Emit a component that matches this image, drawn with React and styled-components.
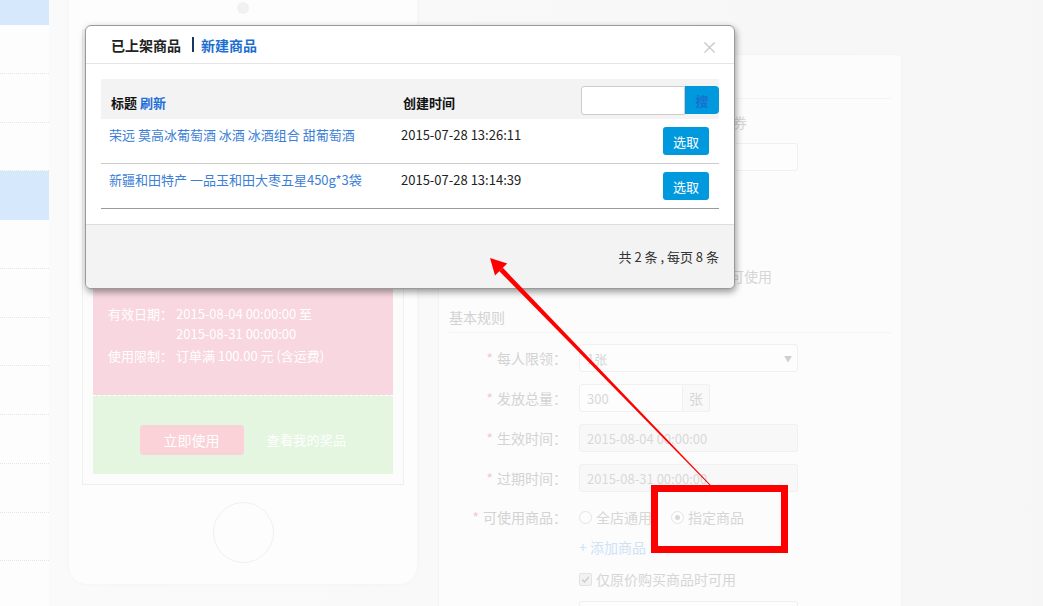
import React from 'react';
import styled, { createGlobalStyle } from 'styled-components';

const GlobalStyle = createGlobalStyle`
  html, body { margin: 0; padding: 0; }
  body {
    font-family: "Noto Sans CJK SC", "Microsoft YaHei", sans-serif;
    font-size: 12px;
    color: #333;
    background: #f9f9f9;
  }
  * { box-sizing: border-box; }
`;

const Page = styled.div`
  position: relative;
  display: flex;
  width: 1043px;
  height: 606px;
  overflow: hidden;
`;

/* ---------- sidebar ---------- */
const Sidebar = styled.div`
  width: 49px;
  flex: none;
  background: #fdfdfd;
`;
const SideList = styled.ul`
  list-style: none;
  margin: -23.75px 0 0;
  padding: 0;
`;
const SideItem = styled.li`
  height: 48.75px;
  background: ${p => (p.$active ? '#d5e8fc' : 'transparent')};
  border-bottom: 1px dotted ${p => (p.$active ? 'transparent' : '#e4e4e4')};
`;

/* ---------- main ---------- */
const Main = styled.div`
  flex: 1;
  display: flex;
  align-items: flex-start;
  gap: 21px;
  padding-left: 20px;
  background: linear-gradient(90deg, #fafafa 0%, #f8f8f8 60%, #f6f6f6 100%);
`;

/* phone preview */
const Phone = styled.div`
  width: 348px;
  height: 614px;
  margin-top: -30px;
  flex: none;
  display: flex;
  flex-direction: column;
  align-items: center;
  padding: 32px 13px 0;
  background: #fdfdfd;
  border-radius: 0 0 18px 18px;
  box-shadow: 0 0 4px rgba(0, 0, 0, 0.03);
`;
const Camera = styled.span`
  width: 12px;
  height: 12px;
  border-radius: 50%;
  background: #f1f1f1;
  margin-bottom: 16px;
`;
const Screen = styled.div`
  align-self: stretch;
  border: 1px solid #efefef;
  background: #fcfcfc;
  padding: 10px;
`;
const CouponTop = styled.div`
  height: 354px;
  background: #f8d7e0;
  color: #fff;
  display: flex;
  flex-direction: column;
  justify-content: flex-end;
  padding: 30px 15px 29px;
`;
const InfoRow = styled.div`
  display: flex;
  font-size: 13px;
  line-height: 20px;
  margin-top: 2px;
`;
const InfoLabel = styled.span`
  width: 68px;
  flex: none;
`;
const CouponBottom = styled.div`
  height: 79px;
  background: #e4f5e0;
  border-top: 1px dashed #fff;
  display: flex;
  align-items: center;
  justify-content: center;
  gap: 23px;
  padding-top: 9px;
`;
const UseButton = styled.span`
  width: 104px;
  height: 30px;
  border-radius: 3px;
  background: #fad2d8;
  color: #fff;
  font-size: 14px;
  display: flex;
  align-items: center;
  justify-content: center;
`;
const PrizeLink = styled.span`
  color: #fff;
  font-size: 13px;
  letter-spacing: 0.3px;
`;
const HomeButton = styled.span`
  width: 61px;
  height: 61px;
  border-radius: 50%;
  border: 1px solid #f0f0f0;
  margin-top: 17px;
`;

/* form panel */
const Panel = styled.div`
  width: 464px;
  height: 700px;
  flex: none;
  margin-top: 54px;
  padding: 0 10px;
  background: #fcfcfc;
  border: 1px solid #f3f3f3;
  border-radius: 4px;
`;
const PanelHeader = styled.div`
  height: 44px;
  display: flex;
  align-items: center;
  border-bottom: 1px solid #f3f3f3;
  font-size: 14px;
  color: #d0d0d0;
`;
const SectionTitle = styled.div`
  margin-top: ${p => p.$mt || 0}px;
  font-size: 14px;
  line-height: 20px;
  color: #d2d2d2;
  padding-bottom: 5px;
  border-bottom: 1px solid #f3f3f3;
`;
const FormRow = styled.div`
  display: flex;
  align-items: center;
  gap: 12px;
  margin-top: ${p => p.$mt}px;
  min-height: ${p => p.$h || 28}px;
`;
const Label = styled.div`
  width: 118px;
  flex: none;
  text-align: right;
  font-size: 14px;
  color: #d3d3d3;
`;
const Star = styled.span`
  color: #f8c8c8;
  margin-right: 4px;
`;
const Field = styled.div`
  width: ${p => p.$w}px;
  height: 28px;
  display: flex;
  align-items: center;
  justify-content: space-between;
  padding: 0 7px;
  font-size: 13px;
  color: #d8d8d8;
  background: ${p => (p.$disabled ? '#f8f8f8' : '#fdfdfd')};
  border: 1px solid #f0f0f0;
  border-radius: ${p => p.$radius || '3px'};
`;
const Caret = styled.span`
  font-size: 8px;
  color: #cfcfcf;
  margin-right: -2px;
`;
const InputGroup = styled.div`
  display: flex;
`;
const Addon = styled.div`
  width: 27px;
  height: 28px;
  display: flex;
  align-items: center;
  justify-content: center;
  font-size: 14px;
  color: #d6d6d6;
  background: #f9f9f9;
  border: 1px solid #f0f0f0;
  border-left: none;
  border-radius: 0 3px 3px 0;
`;
const TipText = styled.div`
  font-size: 14px;
  line-height: 20px;
  color: #d6d6d6;
`;
const Options = styled.div`
  display: flex;
  align-items: center;
  gap: 19px;
`;
const Option = styled.label`
  display: flex;
  align-items: center;
  gap: 4px;
  font-size: 14px;
  color: #d6d6d6;
`;
const Radio = styled.span`
  position: relative;
  width: 13px;
  height: 13px;
  border-radius: 50%;
  border: 1px solid #e4e4e4;
  background: #fdfdfd;
  &::after {
    content: '';
    display: ${p => (p.$checked ? 'block' : 'none')};
    position: absolute;
    left: 3px;
    top: 3px;
    width: 5px;
    height: 5px;
    border-radius: 50%;
    background: #d9d9d9;
  }
`;
const Check = styled.span`
  width: 13px;
  height: 13px;
  border-radius: 2px;
  border: 1px solid #e2e2e2;
  background: #f2f2f2;
  display: flex;
  align-items: center;
  justify-content: center;
`;
const AddLink = styled.span`
  font-size: 14px;
  color: #cfe1f6;
`;

/* ---------- modal ---------- */
const Modal = styled.div`
  position: absolute;
  left: 85px;
  top: 25px;
  width: 650px;
  background: #fff;
  border: 1px solid #9a9a9a;
  border-radius: 6px;
  box-shadow: 1px 3px 7px rgba(0, 0, 0, 0.4);
  overflow: hidden;
`;
const ModalHeader = styled.div`
  height: 38px;
  display: flex;
  align-items: center;
  padding: 0 16px 0 25px;
  border-bottom: 1px solid #e5e5e5;
`;
const Tab = styled.span`
  font-size: 14px;
  font-weight: bold;
  color: ${p => (p.$link ? '#1d6fcf' : '#222')};
`;
const TabBar = styled.span`
  width: 2px;
  height: 15px;
  background: #17375e;
  margin: 0 7px 0 11px;
`;
const Close = styled.span`
  margin-left: auto;
  margin-top: 4px;
  font-size: 17px;
  line-height: 17px;
  color: #c6c6c6;
`;
const ModalBody = styled.div`
  padding: 15px;
`;
const Grid = styled.div`
  display: grid;
  grid-template-columns: 292px 1fr auto;
`;
const Head = styled(Grid)`
  height: 40px;
  background: #f3f3f3;
`;
const HeadCell = styled.div`
  padding: 16px 0 0 10px;
  font-size: 13px;
  line-height: 16px;
  font-weight: bold;
  color: #111;
`;
const Refresh = styled.span`
  color: #1e6fd9;
  margin-left: 3px;
`;
const Search = styled.div`
  display: flex;
  margin-top: 7px;
`;
const SearchInput = styled.div`
  width: 104px;
  height: 29px;
  background: #fff;
  border: 1px solid #cccccc;
  border-radius: 3px 0 0 3px;
`;
const SearchButton = styled.span`
  width: 34px;
  height: 28px;
  background: #0099dd;
  border-radius: 0 4px 4px 0;
  color: #1a6fd0;
  font-size: 13px;
  font-weight: bold;
  display: flex;
  align-items: center;
  justify-content: center;
`;
const Row = styled(Grid)`
  height: 45px;
  border-bottom: 1px solid ${p => (p.$last ? '#9a9a9a' : '#cccccc')};
`;
const Cell = styled.div`
  padding: 8px 0 0 8px;
  font-size: 13px;
  line-height: 16px;
  color: ${p => (p.$link ? '#3b80d6' : '#222')};
`;
const PickButton = styled.span`
  width: 46px;
  height: 28px;
  margin: 8px 10px 0 0;
  background: #0099dd;
  border-radius: 3px;
  color: #fff;
  font-size: 13px;
  display: flex;
  align-items: center;
  justify-content: center;
`;
const ModalFooter = styled.div`
  height: 64px;
  display: flex;
  align-items: center;
  justify-content: flex-end;
  padding: 0 15px;
  background: #f3f3f3;
  border-top: 1px solid #dddddd;
  font-size: 13px;
  color: #333;
`;

/* ---------- annotation ---------- */
const Annotation = styled.svg`
  position: absolute;
  left: 0;
  top: 0;
  pointer-events: none;
`;

const goods = [
  { title: '荣远 莫高冰葡萄酒 冰酒 冰酒组合 甜葡萄酒', time: '2015-07-28 13:26:11' },
  { title: '新疆和田特产 一品玉和田大枣五星450g*3袋', time: '2015-07-28 13:14:39' },
];

export default function App() {
  return (
    <Page>
      <GlobalStyle />
      <Sidebar>
        <SideList>
          {Array.from({ length: 13 }).map((_, i) => (
            <SideItem key={i} $active={i === 0 || i === 4} />
          ))}
        </SideList>
      </Sidebar>

      <Main>
        <Phone>
          <Camera />
          <Screen>
            <CouponTop>
              <InfoRow>
                <InfoLabel>有效日期：</InfoLabel>
                <span>
                  2015-08-04 00:00:00 至<br />
                  2015-08-31 00:00:00
                </span>
              </InfoRow>
              <InfoRow>
                <InfoLabel>使用限制：</InfoLabel>
                <span>订单满 100.00 元 (含运费)</span>
              </InfoRow>
            </CouponTop>
            <CouponBottom>
              <UseButton>立即使用</UseButton>
              <PrizeLink>查看我的奖品</PrizeLink>
            </CouponBottom>
          </Screen>
          <HomeButton />
        </Phone>

        <Panel>
          <PanelHeader>编辑优惠券</PanelHeader>
          <FormRow $mt={13} $h={20}>
            <Label>类型：</Label>
            <TipText>例如：五周年庆店铺优惠券</TipText>
          </FormRow>
          <FormRow $mt={11}>
            <Label><Star>*</Star>优惠券名称：</Label>
            <Field $w={219} />
          </FormRow>
          <FormRow $mt={28}>
            <Label><Star>*</Star>面值：</Label>
            <InputGroup>
              <Field $w={104} $radius="3px 0 0 3px">10</Field>
              <Addon>元</Addon>
            </InputGroup>
          </FormRow>
          <FormRow $mt={35}>
            <Label>适用人群：</Label>
            <Options>
              <Option><Radio $checked />全部用户</Option>
              <Option><Radio />仅会员可使用</Option>
            </Options>
          </FormRow>

          <SectionTitle $mt={17}>基本规则</SectionTitle>

          <FormRow $mt={11}>
            <Label><Star>*</Star>每人限领：</Label>
            <Field $w={219}>
              1张<Caret>▼</Caret>
            </Field>
          </FormRow>
          <FormRow $mt={12}>
            <Label><Star>*</Star>发放总量：</Label>
            <InputGroup>
              <Field $w={104} $radius="3px 0 0 3px">300</Field>
              <Addon>张</Addon>
            </InputGroup>
          </FormRow>
          <FormRow $mt={12}>
            <Label><Star>*</Star>生效时间：</Label>
            <Field $w={219} $disabled>2015-08-04 00:00:00</Field>
          </FormRow>
          <FormRow $mt={12}>
            <Label><Star>*</Star>过期时间：</Label>
            <Field $w={219} $disabled>2015-08-31 00:00:00</Field>
          </FormRow>
          <FormRow $mt={11}>
            <Label><Star>*</Star>可使用商品：</Label>
            <Options>
              <Option><Radio />全店通用</Option>
              <Option><Radio $checked />指定商品</Option>
            </Options>
          </FormRow>
          <FormRow $mt={6} $h={20}>
            <Label />
            <AddLink>+ 添加商品</AddLink>
          </FormRow>
          <FormRow $mt={12} $h={20}>
            <Label />
            <Option>
              <Check>
                <svg width="9" height="9" viewBox="0 0 9 9">
                  <polyline points="1.2,4.6 3.6,7 7.8,1.8" fill="none" stroke="#d0d0d0" strokeWidth="1.6" />
                </svg>
              </Check>
              仅原价购买商品时可用
            </Option>
          </FormRow>
          <FormRow $mt={12}>
            <Label />
            <Field $w={219} />
          </FormRow>
        </Panel>
      </Main>

      <Modal>
        <ModalHeader>
          <Tab>已上架商品</Tab>
          <TabBar />
          <Tab $link>新建商品</Tab>
          <Close>×</Close>
        </ModalHeader>
        <ModalBody>
          <Head>
            <HeadCell>
              标题<Refresh>刷新</Refresh>
            </HeadCell>
            <HeadCell>创建时间</HeadCell>
            <Search>
              <SearchInput />
              <SearchButton>搜</SearchButton>
            </Search>
          </Head>
          {goods.map((g, i) => (
            <Row key={g.time} $last={i === goods.length - 1}>
              <Cell $link>{g.title}</Cell>
              <Cell>{g.time}</Cell>
              <PickButton>选取</PickButton>
            </Row>
          ))}
        </ModalBody>
        <ModalFooter>共 2 条 , 每页 8 条</ModalFooter>
      </Modal>

      <Annotation width="1043" height="606" viewBox="0 0 1043 606">
        <polygon
          points="712.4,486.7 711.6,487.3 499.3,271.2 502.9,267.8"
          fill="#ff0000"
        />
        <polygon points="490,258 507.2,263.6 495,275.4" fill="#ff0000" />
        <rect x="654.5" y="488.5" width="130" height="61" fill="none" stroke="#ff0000" strokeWidth="7" />
      </Annotation>
    </Page>
  );
}
